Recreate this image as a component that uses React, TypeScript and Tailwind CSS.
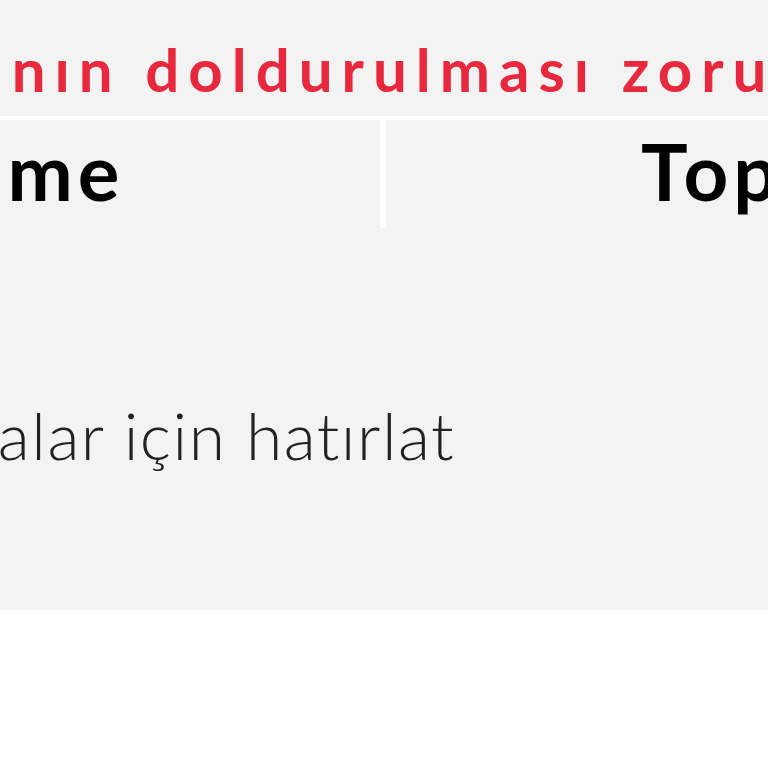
export default function App() {
  return (
    <div className="w-[768px] h-[768px] overflow-hidden bg-white font-['Lato',sans-serif]">
      <div className="flex h-[610px] flex-col bg-[#f3f3f3]">
        {/* error message */}
        <div className="h-[116px] pt-[39px] whitespace-nowrap">
          <p className="ml-[-365px] text-[60px] font-bold leading-none tracking-[9px] text-[#e8283c]">
            Tutar alanının doldurulması zorunludur
          </p>
        </div>
        <div className="h-[4px] bg-white" />

        {/* table header */}
        <div className="flex h-[108px] whitespace-nowrap">
          <div className="w-[380px] overflow-hidden pt-[12px]">
            <span className="ml-[-156px] block text-[78px] font-bold leading-none tracking-[5px] text-black">
              Ödeme
            </span>
          </div>
          <div className="w-[6px] bg-white" />
          <div className="flex-1 overflow-hidden pt-[12px]">
            <span className="ml-[255px] block text-[78px] font-bold leading-none tracking-[5px] text-black">
              Toplam
            </span>
          </div>
        </div>

        {/* reminder */}
        <div className="pt-[174px] whitespace-nowrap">
          <p className="ml-[-155px] text-[66px] font-light leading-none tracking-[1.5px] text-[#222]">
            Faturalar için hatırlat
          </p>
        </div>
      </div>
    </div>
  )
}
